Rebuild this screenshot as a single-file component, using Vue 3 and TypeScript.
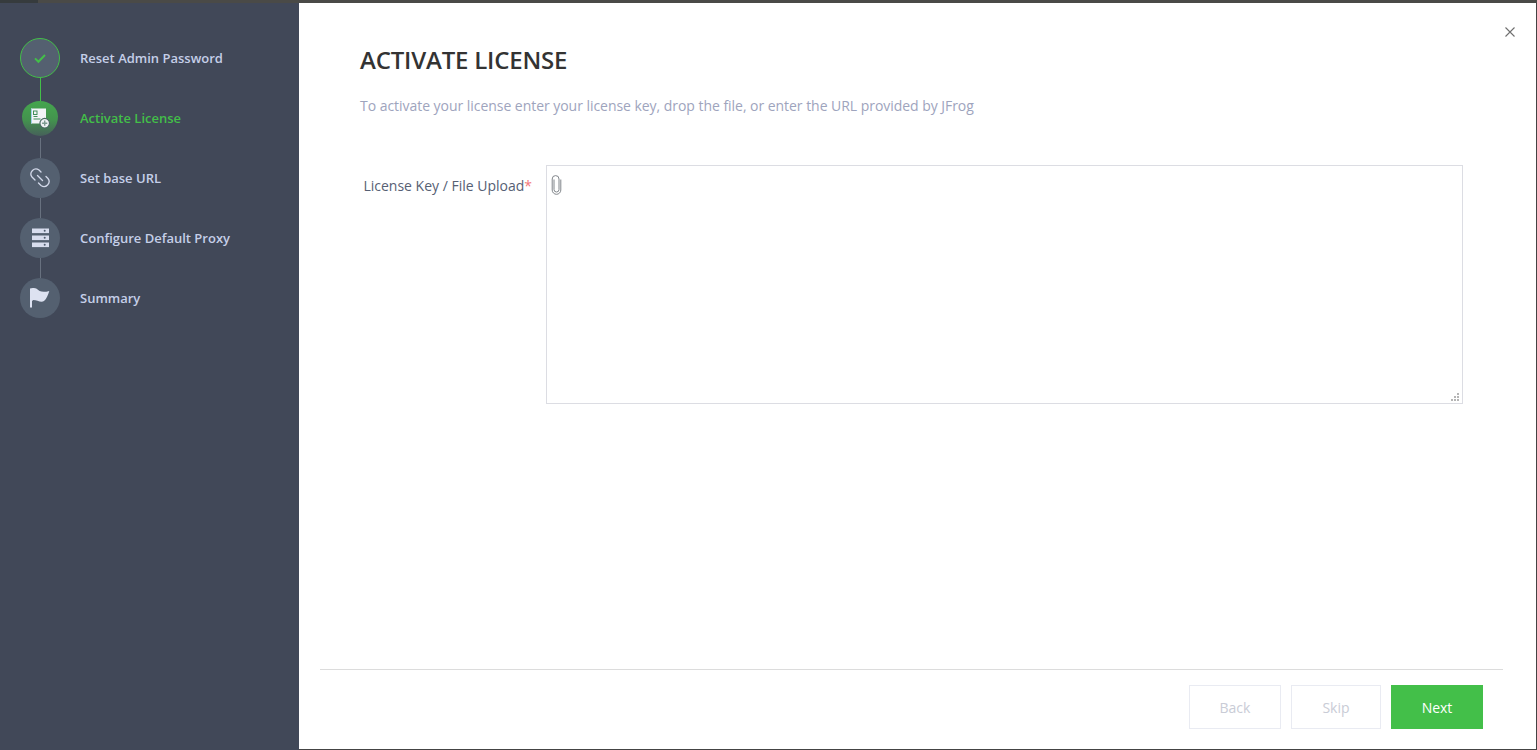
<script setup lang="ts">
interface Step { label: string; state: 'done' | 'active' | 'todo'; icon: string }
const steps: Step[] = [
  { label: 'Reset Admin Password', state: 'done', icon: 'check' },
  { label: 'Activate License', state: 'active', icon: 'license' },
  { label: 'Set base URL', state: 'todo', icon: 'link' },
  { label: 'Configure Default Proxy', state: 'todo', icon: 'server' },
  { label: 'Summary', state: 'todo', icon: 'flag' },
]
</script>

<template>
  <div class="page">
    <div class="topbar"><span class="topbar-left"></span></div>
    <div class="shell">
      <aside class="sidebar">
        <ol class="steps">
          <li v-for="(s, i) in steps" :key="s.label" class="step" :class="s.state">
            <div class="rail">
              <div class="badge">
                <svg v-if="s.icon === 'check'" width="16" height="16" viewBox="0 0 16 16">
                  <path d="M3 8.4 6.4 11.8 13 5" fill="none" stroke="#43bf49" stroke-width="2" />
                </svg>
                <svg v-else-if="s.icon === 'license'" width="28" height="26" viewBox="0 0 28 26">
                  <rect x="5" y="2.5" width="15" height="15" fill="#f2f4f7" />
                  <rect x="5" y="2.5" width="1" height="15" fill="#9fd0e8" />
                  <rect x="7.5" y="5" width="3.5" height="3.5" fill="none" stroke="#3f8f5a" stroke-width="1" />
                  <rect x="7.5" y="10" width="4" height="1" fill="#3f8f5a" />
                  <rect x="7.5" y="12.5" width="7" height="1" fill="#3f8f5a" />
                  <circle cx="18.7" cy="17.2" r="4.8" fill="#eef1f3" stroke="#4a6a62" stroke-width="1.2" />
                  <path d="M18.7 14.6v5.2M16.1 17.2h5.2" stroke="#7d9a90" stroke-width="1.4" />
                </svg>
                <svg v-else-if="s.icon === 'link'" width="22" height="22" viewBox="0 0 22 22">
                  <path d="M12 5 10 3A5 5 0 0 0 3 10L6 13M8.5 8.5 13.5 13.5M17 9.5 19 11.5A5 5 0 0 1 12 18.5L9.5 16" fill="none" stroke="#d3d9ea" stroke-width="1.3" stroke-linecap="round" />
                </svg>
                <svg v-else-if="s.icon === 'server'" width="18" height="20" viewBox="0 0 18 20">
                  <g v-for="y in [1, 8, 15]" :key="y">
                    <rect x="1" :y="y - 0.5" width="17" height="4.6" fill="#d8ddee" />
                    <circle cx="13.7" :cy="y + 1.8" r="1" fill="#4f5c6e" />
                  </g>
                </svg>
                <svg v-else width="22" height="24" viewBox="0 0 22 24">
                  <path d="M1 2.5C3 1.5 6.5 2 8 3 10 5 13 7 20.3 5 19 9 17.5 13 15 15 12 17 8 14 4.3 14L3 15V21.5H1Z" fill="#dde2f1" />
                </svg>
              </div>
              <span v-if="i < steps.length - 1" class="line"></span>
            </div>
            <span class="label">{{ s.label }}</span>
          </li>
        </ol>
      </aside>

      <main class="main">
        <button class="close" aria-label="Close">
          <svg width="10" height="10" viewBox="0 0 10 10">
            <path d="M.5.5l9 9M9.5.5l-9 9" stroke="#6f6f6f" stroke-width="1.1" fill="none" />
          </svg>
        </button>
        <div class="content">
          <h1 class="title">ACTIVATE LICENSE</h1>
          <p class="subtitle">To activate your license enter your license key, drop the file, or enter the URL provided by JFrog</p>
          <div class="field">
            <label class="field-label">License Key / File Upload<span class="req">*</span></label>
            <div class="textarea">
              <svg class="clip" width="12" height="20" viewBox="0 0 12 20">
                <path d="M9.8 4.5V15A4.3 4.3 0 0 1 1.2 15V4A3.4 3.4 0 0 1 8 4V14.5A2.5 2.5 0 0 1 3 14.5V4.5" fill="none" stroke="#80858a" stroke-width="1" />
              </svg>
              <svg class="grip" width="8" height="8" viewBox="0 0 8 8" fill="#b5b5b5">
                <rect x="6" y="0" width="2" height="2" />
                <rect x="3" y="3" width="2" height="2" />
                <rect x="6" y="3" width="2" height="2" />
                <rect x="0" y="6" width="2" height="2" />
                <rect x="3" y="6" width="2" height="2" />
                <rect x="6" y="6" width="2" height="2" />
              </svg>
            </div>
          </div>
        </div>
        <footer class="footer">
          <button class="btn ghost back">Back</button>
          <button class="btn ghost skip">Skip</button>
          <button class="btn primary">Next</button>
        </footer>
      </main>
    </div>
  </div>
</template>

<style>
html, body { margin: 0; height: 100%; overflow: hidden; background: #fff; }
</style>

<style scoped>
.page {
  width: 1537px;
  height: 750px;
  display: flex;
  flex-direction: column;
  font-family: "Open Sans", "Noto Sans", sans-serif;
  box-sizing: border-box;
}
.topbar { height: 3px; background: #4a4a47; flex: none; }
.topbar-left { display: block; width: 38px; height: 3px; background: #363b3d; }
.shell { flex: 1; display: flex; min-height: 0; }
.sidebar { width: 299px; flex: none; background: #414858; }
.steps { list-style: none; margin: 0; padding: 35px 0 0 20px; }
.step { display: flex; align-items: flex-start; height: 60px; }
.rail { width: 40px; display: flex; flex-direction: column; align-items: center; flex: none; }
.badge {
  width: 40px; height: 40px; box-sizing: border-box; border-radius: 50%;
  background: #546070; display: flex; align-items: center; justify-content: center; flex: none;
}
.line { width: 1px; height: 20px; background: #68717f; }
.label {
  margin-left: 20px; font-size: 13px; font-weight: 600; line-height: 40px; color: #c5cfe8;
}
.done .badge { border: 1px solid #43bf49; }
.done .line { height: 23px; background: #43bf49; }
.active .label { color: #43bf49; }
.active .badge {
  width: 36px; height: 35px; margin-top: 3px; margin-bottom: 2px;
  border-radius: 50% 50% 50% 50% / 44% 44% 56% 56%;
  background: linear-gradient(180deg, #45a64e 0%, #43924e 55%, #46605a 100%);
}
.active .badge svg { flex: none; }
.main {
  flex: 1; position: relative; display: flex; flex-direction: column; min-width: 0;
  background: #fff; border-right: 1px solid #444; border-bottom: 1px solid #444; box-sizing: border-box;
}
.close {
  position: absolute; top: 24px; right: 21px; width: 10px; height: 10px; padding: 0;
  border: 0; background: none; display: block; line-height: 0;
}
.content { flex: 1; padding: 40px 73px 0 61px; min-height: 0; }
.title {
  margin: 0; font-size: 24px; line-height: 34px; font-weight: 600; letter-spacing: -0.19px; color: #333;
}
.subtitle {
  margin: 19px 0 0; font-size: 14px; line-height: 20px; color: #9ea4bd; letter-spacing: -0.04px;
}
.field { display: flex; align-items: flex-start; margin-top: 49px; }
.field-label {
  width: 172px; margin-right: 14px; flex: none; text-align: right; box-sizing: border-box;
  font-size: 14px; line-height: 20px; padding-top: 11px; color: #566074; white-space: nowrap;
}
.req { color: #f2777a; }
.textarea {
  position: relative; flex: 1; height: 239px; box-sizing: border-box; border: 1px solid #dcdde3; background: #fff;
}
.clip { position: absolute; left: 4px; top: 9px; }
.grip { position: absolute; right: 3px; bottom: 2px; }
.footer {
  margin: 0 33px 0 21px; border-top: 1px solid #dcdcdc; padding: 15px 20px 20px 0;
  display: flex; justify-content: flex-end; gap: 10px; flex: none;
}
.btn {
  height: 44px; box-sizing: border-box; font-family: inherit; font-size: 14px; padding: 0; border-radius: 0;
}
.ghost { background: #fff; border: 1px solid #e9ebf2; color: #c9ccd6; }
.back { width: 92px; }
.skip { width: 90px; }
.primary { width: 92px; background: #43bf49; border: 0; color: #fff; font-weight: 400; }
</style>
